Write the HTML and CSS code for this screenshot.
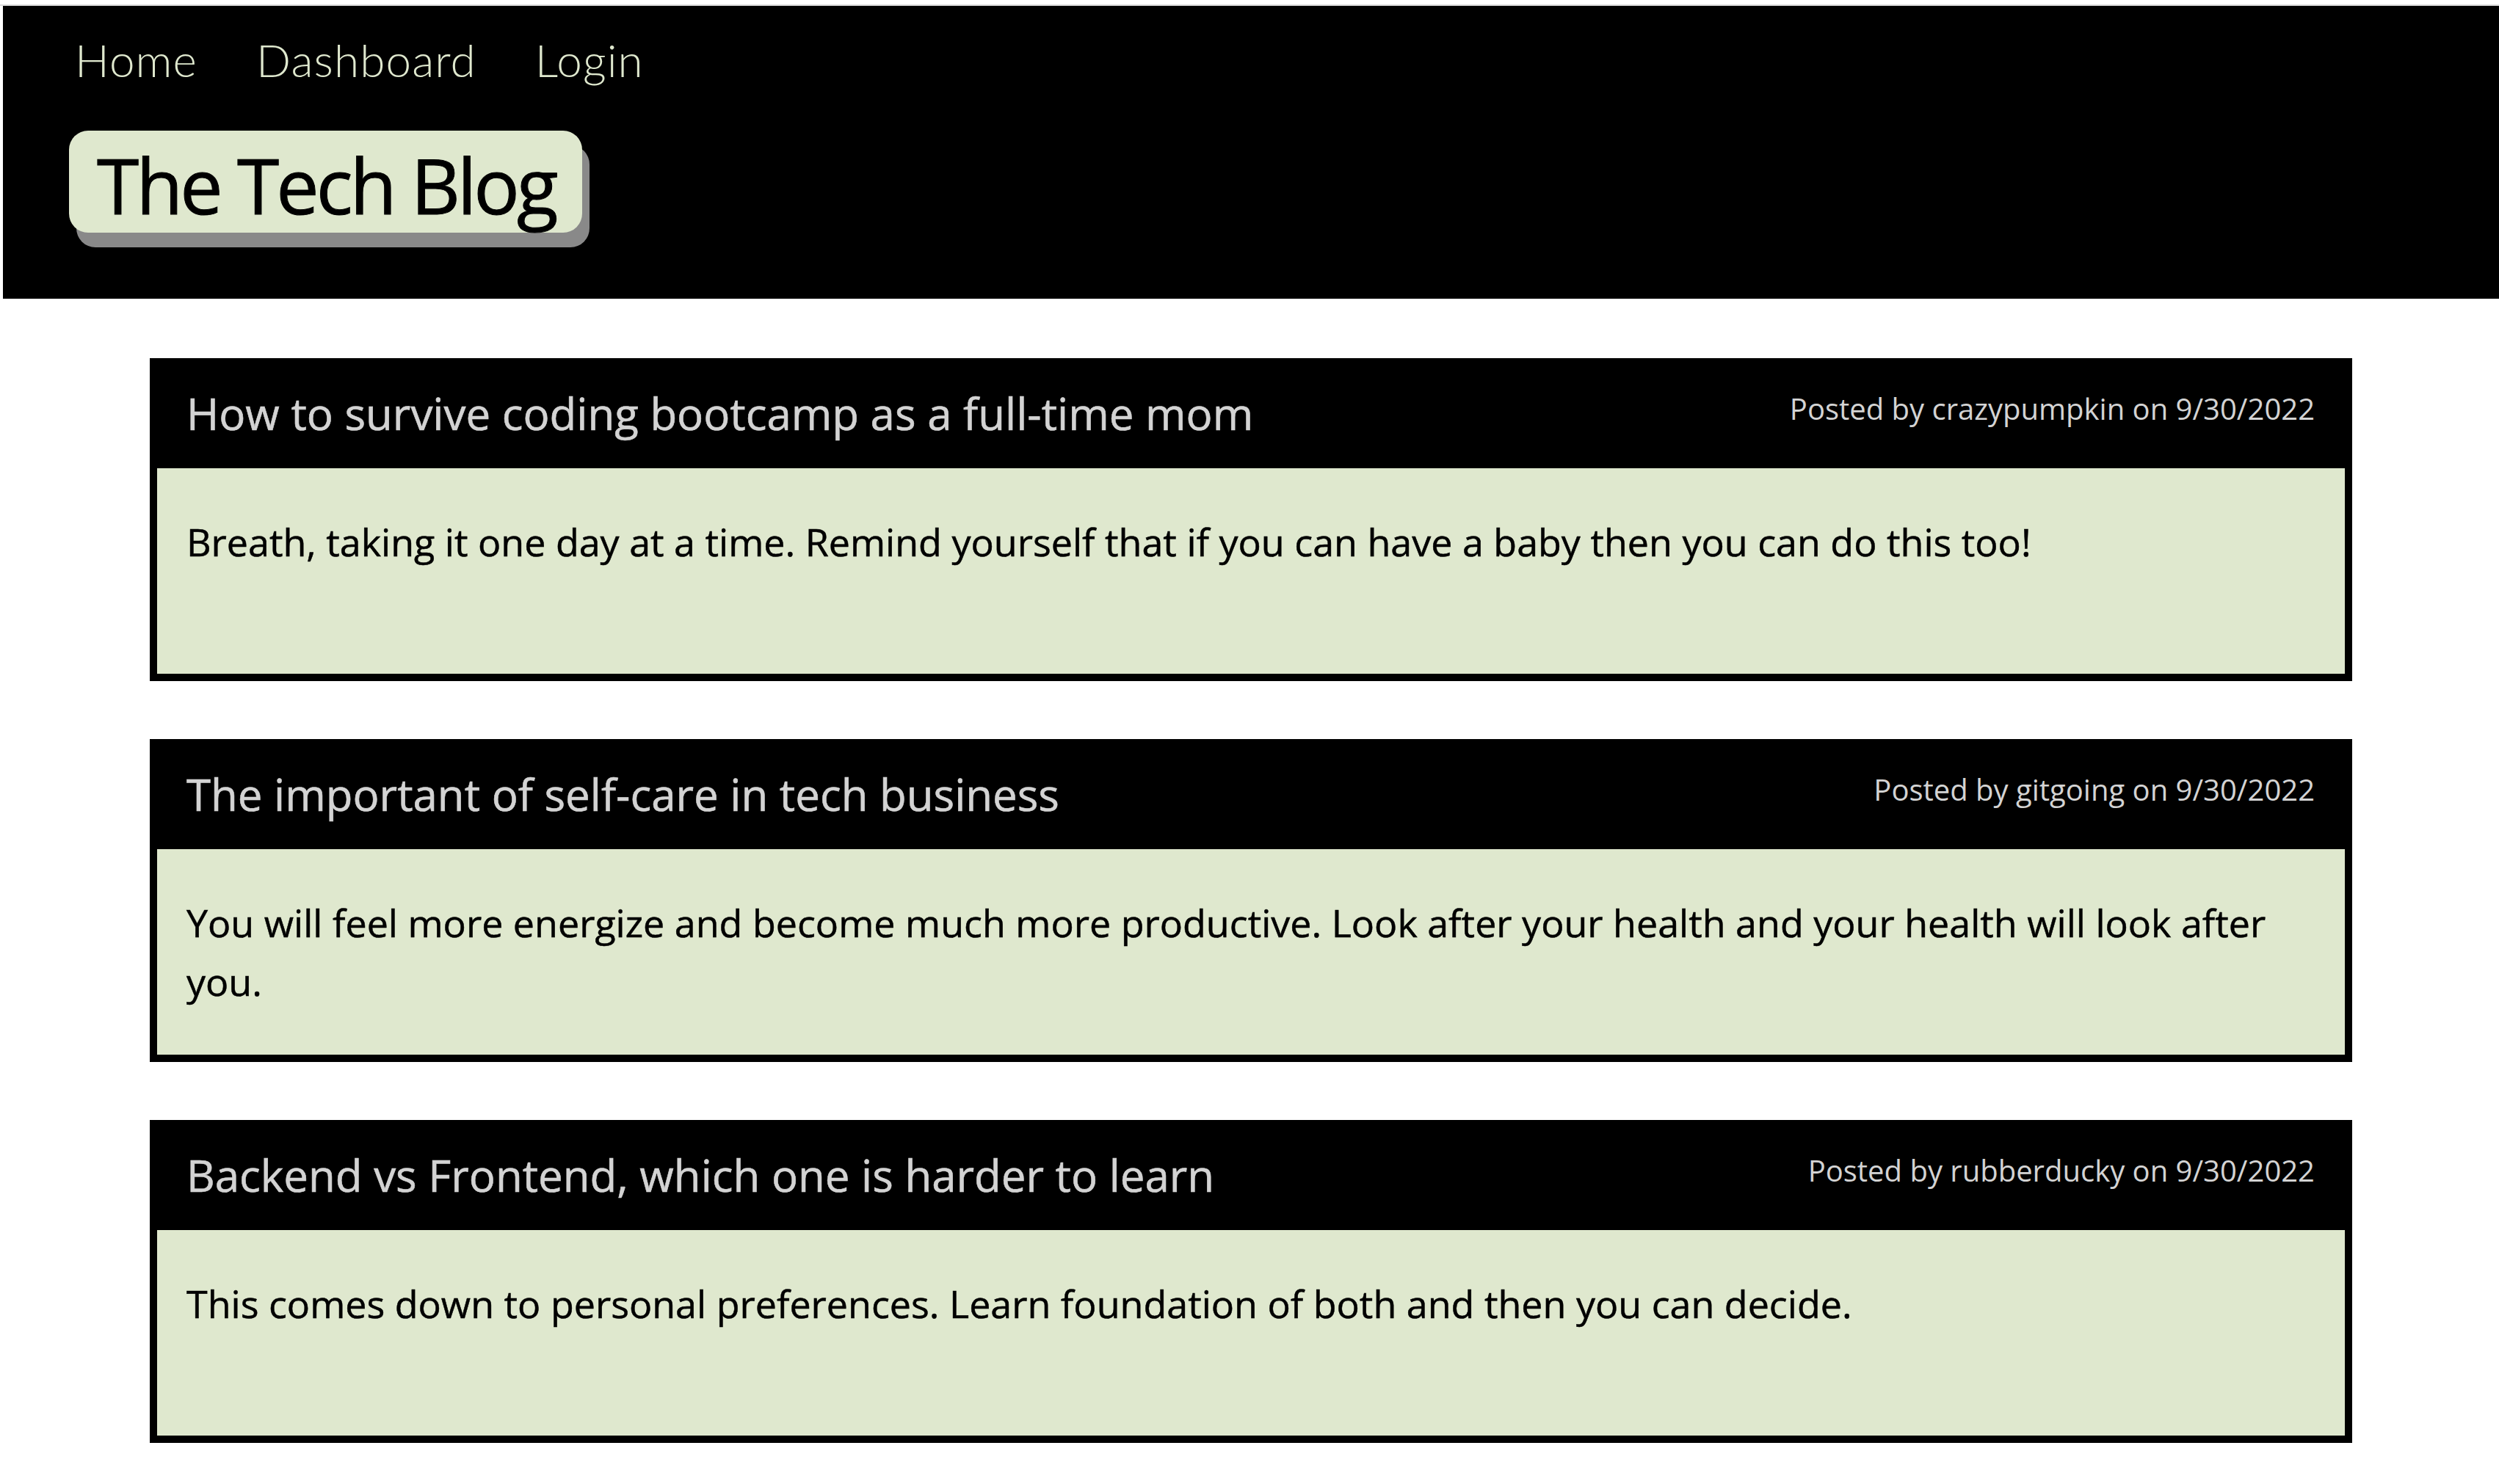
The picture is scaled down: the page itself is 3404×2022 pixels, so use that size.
FILE: index.html
```html
<!DOCTYPE html>
<html lang="en">
<head>
<meta charset="utf-8">
<title>The Tech Blog</title>
<link rel="stylesheet" href="styles.css">
</head>
<body>
<div class="topline"></div>
<header class="site-header">
  <nav class="nav">
    <a class="nav-link" href="#">Home</a>
    <a class="nav-link" href="#">Dashboard</a>
    <a class="nav-link" href="#">Login</a>
  </nav>
  <h1 class="logo">The Tech Blog</h1>
</header>
<main class="posts">
  <article class="post">
    <div class="post-head">
      <h2 class="post-title">How to survive coding bootcamp as a full-time mom</h2>
      <p class="post-meta">Posted by crazypumpkin on 9/30/2022</p>
    </div>
    <div class="post-body">
      <p class="post-text">Breath, taking it one day at a time. Remind yourself that if you can have a baby then you can do this too!</p>
    </div>
  </article>
  <article class="post">
    <div class="post-head">
      <h2 class="post-title">The important of self-care in tech business</h2>
      <p class="post-meta">Posted by gitgoing on 9/30/2022</p>
    </div>
    <div class="post-body">
      <p class="post-text">You will feel more energize and become much more productive. Look after your health and your health will look after you.</p>
    </div>
  </article>
  <article class="post">
    <div class="post-head">
      <h2 class="post-title">Backend vs Frontend, which one is harder to learn</h2>
      <p class="post-meta">Posted by rubberducky on 9/30/2022</p>
    </div>
    <div class="post-body">
      <p class="post-text">This comes down to personal preferences. Learn foundation of both and then you can decide.</p>
    </div>
  </article>
</main>
</body>
</html>
```
FILE: styles.css
```css
html, body {
  margin: 0;
  padding: 0;
  background: #ffffff;
}
body {
  font-family: "Open Sans", "Liberation Sans", sans-serif;
  color: #000;
}
.topline {
  height: 2px;
  margin-top: 6px;
  background: #dcdcdc;
}
.site-header {
  margin-left: 4px;
  height: 399px;
  box-sizing: border-box;
  background: #000;
  padding: 37px 0 0 90px;
}
.nav {
  display: flex;
  gap: 80px;
  padding-left: 8px;
  height: 72px;
}
.nav-link {
  font-family: "Lato", "Open Sans", sans-serif;
  font-weight: 300;
  font-size: 62px;
  letter-spacing: 1.1px;
  line-height: 72px;
  color: #dfe8ce;
  text-decoration: none;
}
.logo {
  display: inline-block;
  margin: 61px 0 0 0;
  height: 139px;
  box-sizing: border-box;
  padding: 0 36px 0 38px;
  background: #dfe8ce;
  border-radius: 26px;
  box-shadow: 10px 20px 0 #898989;
  font-family: "Open Sans", sans-serif;
  font-weight: 400;
  font-size: 104px;
  letter-spacing: -3.9px;
  line-height: 147px;
  color: #000;
  white-space: nowrap;
  -webkit-text-stroke: 1px #000;
}
.posts {
  padding: 81px 200px 40px 204px;
  display: flex;
  flex-direction: column;
  gap: 79px;
}
.post {
  border: 10px solid #000;
  background: #000;
}
.post-head {
  height: 140px;
  box-sizing: border-box;
  padding: 24px 41px 0 40px;
  display: flex;
  justify-content: space-between;
  align-items: flex-start;
}
.post-title {
  margin: 0;
  font-weight: 400;
  font-size: 60px;
  line-height: normal;
  color: #d3d3d3;
  -webkit-text-stroke: 0.6px #d3d3d3;
}
.post-meta {
  margin: 7px 0 0 0;
  font-size: 40px;
  line-height: normal;
  color: #d3d3d3;
}
.post-body {
  background: #dfe8ce;
  height: 280px;
  box-sizing: border-box;
  padding: 60px 40px 0 40px;
}
.post-text {
  margin: 0;
  font-size: 52px;
  line-height: 80px;
  -webkit-text-stroke: 0.5px #000;
}
```
